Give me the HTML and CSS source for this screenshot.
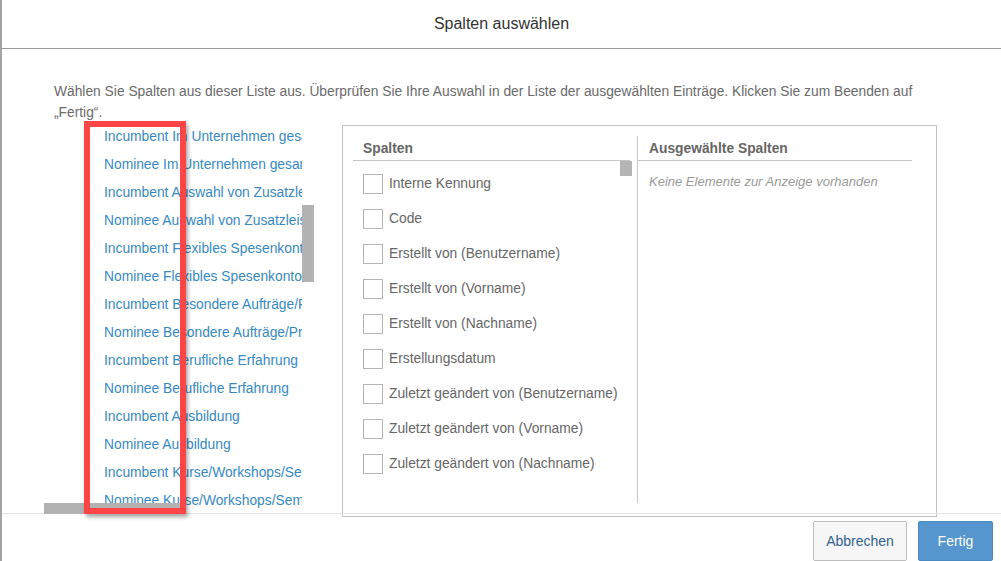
FILE: index.html
```html
<!DOCTYPE html>
<html lang="de">
<head>
<meta charset="utf-8">
<title>Spalten auswählen</title>
<link rel="stylesheet" href="styles.css">
</head>
<body>
<div class="dialog">
  <header class="dlg-header"><h1 class="dlg-title">Spalten auswählen</h1></header>
  <div class="dlg-body">
    <p class="desc">Wählen Sie Spalten aus dieser Liste aus. Überprüfen Sie Ihre Auswahl in der Liste der ausgewählten Einträge. Klicken Sie zum Beenden auf „Fertig“.</p>
    <div class="panes">
      <div class="source">
        <ul class="source-list">
          <li>Incumbent Im Unternehmen gesamt</li>
          <li>Nominee Im Unternehmen gesamt</li>
          <li>Incumbent Auswahl von Zusatzleistungen</li>
          <li>Nominee Auswahl von Zusatzleistungen</li>
          <li>Incumbent Flexibles Spesenkonto</li>
          <li>Nominee Flexibles Spesenkonto</li>
          <li>Incumbent Besondere Aufträge/Projekte</li>
          <li>Nominee Besondere Aufträge/Projekte</li>
          <li>Incumbent Berufliche Erfahrung</li>
          <li>Nominee Berufliche Erfahrung</li>
          <li>Incumbent Ausbildung</li>
          <li>Nominee Ausbildung</li>
          <li>Incumbent Kurse/Workshops/Seminare</li>
          <li>Nominee Kurse/Workshops/Seminare</li>
        </ul>
        <div class="vthumb"></div>
        <div class="hthumb"></div>
        <div class="highlight"></div>
      </div>
      <div class="picker">
        <div class="col col-avail">
          <div class="col-head">Spalten</div>
          <ul class="check-list">
            <li><span class="cb"></span>Interne Kennung</li>
            <li><span class="cb"></span>Code</li>
            <li><span class="cb"></span>Erstellt von (Benutzername)</li>
            <li><span class="cb"></span>Erstellt von (Vorname)</li>
            <li><span class="cb"></span>Erstellt von (Nachname)</li>
            <li><span class="cb"></span>Erstellungsdatum</li>
            <li><span class="cb"></span>Zuletzt geändert von (Benutzername)</li>
            <li><span class="cb"></span>Zuletzt geändert von (Vorname)</li>
            <li><span class="cb"></span>Zuletzt geändert von (Nachname)</li>
          </ul>
          <div class="vthumb2"></div>
        </div>
        <div class="col col-sel">
          <div class="col-head col-head-sel">Ausgewählte Spalten</div>
          <p class="empty">Keine Elemente zur Anzeige vorhanden</p>
        </div>
      </div>
    </div>
  </div>
  <footer class="dlg-footer">
    <button class="btn btn-default">Abbrechen</button>
    <button class="btn btn-primary">Fertig</button>
  </footer>
</div>
</body>
</html>
```

FILE: styles.css
```css
* { box-sizing: border-box; }
html, body { margin: 0; padding: 0; background: #fff; }
body {
  font-family: "Liberation Sans", Arial, sans-serif;
  font-size: 13.8px;
  color: #666;
  width: 1001px;
  height: 561px;
  overflow: hidden;
}
.dialog {
  height: 561px;
  border-left: 2px solid #a4a4a4;
  display: flex;
  flex-direction: column;
}
.dlg-header {
  height: 49px;
  border-bottom: 1px solid #9a9a9a;
  display: flex;
  align-items: center;
  justify-content: center;
}
.dlg-title {
  margin: 0;
  font-size: 16px;
  font-weight: normal;
  color: #333;
}
.dlg-body {
  height: 464px;
  padding-left: 42px;
}
.desc {
  margin: 32px 0 0 0;
  padding-left: 10px;
  width: 895px;
  line-height: 21px;
  color: #6a6a6a;
}
.panes {
  display: flex;
  gap: 28px;
  height: 390px;
}
.source {
  position: relative;
  width: 270px;
  height: 391px;
  flex-shrink: 0;
}
.source-list {
  list-style: none;
  margin: 0;
  padding: 0 0 0 60px;
  width: 258px;
  height: 391px;
  overflow: hidden;
}
.source-list li {
  height: 28px;
  line-height: 27px;
  white-space: nowrap;
  color: #3689c3;
}
.vthumb {
  position: absolute;
  left: 258px;
  top: 82px;
  width: 12px;
  height: 77px;
  background: #b2b2b2;
}
.hthumb {
  position: absolute;
  left: 0;
  top: 380px;
  width: 140px;
  height: 11px;
  background: #b2b2b2;
}
.highlight {
  position: absolute;
  left: 40px;
  top: -2px;
  width: 102px;
  height: 393px;
  border: 6px solid #ff4545;
  box-shadow: 2px 3px 4px rgba(0, 0, 0, 0.35);
  z-index: 2;
}
.picker {
  width: 595px;
  height: 392px;
  margin-top: 2px;
  border: 1px solid #c2c2c2;
  padding: 10px 0 13px 0;
  display: flex;
  flex-shrink: 0;
}
.col { height: 367px; }
.col-avail {
  position: relative;
  width: 295px;
  padding: 0 5px 0 10px;
  border-right: 1px solid #c6c6c6;
}
.col-sel {
  flex: 1;
  padding-right: 24px;
}
.col-head {
  height: 25px;
  line-height: 25px;
  border-bottom: 1px solid #c6c6c6;
  padding-left: 10px;
  margin-right: 2px;
  font-weight: bold;
  color: #666;
}
.col-head-sel {
  padding-left: 11px;
  margin-right: 0;
}
.check-list {
  list-style: none;
  margin: 0;
  padding: 5px 0 0 10px;
}
.check-list li {
  height: 35px;
  display: flex;
  align-items: center;
  color: #666;
  white-space: nowrap;
}
.cb {
  width: 20px;
  height: 20px;
  border: 1px solid #b4b4b4;
  background: #fff;
  margin-right: 6px;
  flex-shrink: 0;
}
.vthumb2 {
  position: absolute;
  right: 5px;
  top: 25px;
  width: 12px;
  height: 15px;
  background: #b4b4b4;
}
.empty {
  margin: 0;
  padding: 11px 0 0 11px;
  line-height: 20px;
  font-size: 13px;
  font-style: italic;
  color: #999;
}
.dlg-footer {
  height: 48px;
  border-top: 1px solid #e4e4e4;
  display: flex;
  justify-content: flex-end;
  align-items: flex-start;
  gap: 11px;
  padding: 7px 8px 0 0;
}
.btn {
  height: 40px;
  font-family: "Liberation Sans", Arial, sans-serif;
  font-size: 14px;
  border-radius: 2px;
  padding: 0 10px;
}
.btn-default {
  width: 94px;
  background: #f7f7f7;
  border: 1px solid #bdbdbd;
  color: #32628e;
}
.btn-primary {
  width: 75px;
  background: #5496cd;
  border: 1px solid #4a8ac2;
  color: #fff;
}
```
